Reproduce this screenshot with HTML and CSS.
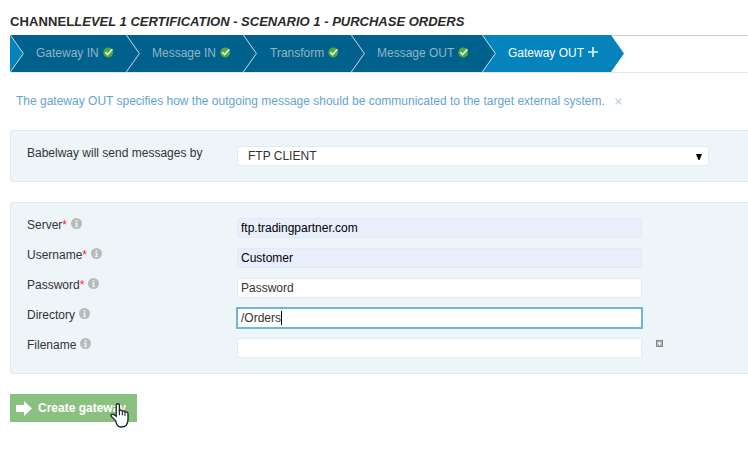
FILE: index.html
```html
<!DOCTYPE html>
<html lang="en">
<head>
<meta charset="utf-8">
<title>Channel</title>
<link rel="stylesheet" href="styles.css">
</head>
<body>
<svg class="defs" width="0" height="0" aria-hidden="true">
  <symbol id="check" viewBox="0 0 11 11"><circle cx="5.2" cy="5.5" r="4.9" fill="#53aa3c"/><path d="M2.3 5.2l2.3 2.4L9.4 2.2" fill="none" stroke="#e8f5e4" stroke-width="1.6"/></symbol>
  <symbol id="info" viewBox="0 0 11 11"><circle cx="5.5" cy="5.5" r="5.5" fill="#b9bbbb"/><path d="M4.7 2h1.8v1.5H4.7zM4 4.5h2.5V8H7v1H4V8h.7V5.4H4z" fill="#e9eeef"/></symbol>
  <symbol id="chevron" viewBox="0 0 14 37"><path d="M.3 0L13.4 18.5.3 37" fill="none" stroke="#c3dfeb" stroke-width="1"/></symbol>
</svg>
<h1 class="title"><span>CHANNEL</span><em>LEVEL 1 CERTIFICATION - SCENARIO 1 - PURCHASE ORDERS</em></h1>
<nav class="steps">
  <div class="step s1"><svg class="chev"><path d="M0 0L13 18.5 0 37z" fill="#0583bd"/><use href="#chevron"/></svg><span>Gateway IN</span><svg class="check"><use href="#check"/></svg></div>
  <div class="step s2"><svg class="chev"><use href="#chevron"/></svg><span>Message IN</span><svg class="check"><use href="#check"/></svg></div>
  <div class="step s3"><svg class="chev"><use href="#chevron"/></svg><span>Transform</span><svg class="check"><use href="#check"/></svg></div>
  <div class="step s4"><svg class="chev"><use href="#chevron"/></svg><span>Message OUT</span><svg class="check"><use href="#check"/></svg></div>
  <div class="step s5 active"><svg class="chev"><path d="M0 0L13 18.5 0 37z" fill="#00618c"/><use href="#chevron"/></svg><span>Gateway OUT</span><svg class="plus" viewBox="0 0 10 10"><path d="M5 0v10M0 5h10" stroke="#e4f2f9" stroke-width="1.7"/></svg></div>
</nav>
<p class="hint"><span>The gateway OUT specifies how the outgoing message should be communicated to the target external system.</span><svg class="close" viewBox="0 0 7 7"><path d="M.7.7l5.6 5.6M6.3.7L.7 6.3" stroke="#b5d5e8" stroke-width="1.4"/></svg></p>
<section class="panel method">
  <label class="label">Babelway will send messages by</label>
  <div class="select"><span>FTP CLIENT</span><svg class="arrow" viewBox="0 0 6 6"><path d="M0 0h6L3.5 6h-1z"/></svg></div>
</section>
<section class="panel fields">
  <div class="row"><label class="label">Server<b>*</b><svg class="info"><use href="#info"/></svg></label><div class="input auto">ftp.tradingpartner.com</div></div>
  <div class="row"><label class="label">Username<b>*</b><svg class="info"><use href="#info"/></svg></label><div class="input auto">Customer</div></div>
  <div class="row"><label class="label">Password<b>*</b><svg class="info"><use href="#info"/></svg></label><div class="input">Password</div></div>
  <div class="row"><label class="label">Directory<svg class="info"><use href="#info"/></svg></label><div class="input focus">/Orders<i class="caret"></i></div></div>
  <div class="row"><label class="label">Filename<svg class="info"><use href="#info"/></svg></label><div class="input"></div><svg class="add" viewBox="0 0 7 7"><path fill="#888" d="M0 0h7v7H0z"/><path fill="#b5b5b5" d="M1 1h5v5H1z"/><path d="M3.5 2v3M2 3.5h3" stroke="#fff"/></svg></div>
</section>
<button class="create"><svg class="go" viewBox="0 0 16 15"><path d="M0 4h8V0l8 7.5L8 15v-4H0z" fill="#fff"/></svg><span>Create gateway</span><svg class="cursor" viewBox="0 0 19 25"><path d="M5.6 17.6L1.6 13.6C.2 12.1 1.8 10.4 3.6 11.4l2.6 1.8V2.4c0-2.2 3.2-2.2 3.2 0v5.2c1-.9 2.6-.5 2.9.5.9-.5 2.5-.1 2.7.9 1.4-.4 3 .2 3 1.8v5.4c0 4.6-2.4 7.8-6.8 7.8-3 0-4.9-2.4-5.6-6.4z" fill="#fff" stroke="#1c2029" stroke-width="1.3"/><path d="M9.4 7.5v4.7M12.3 8.3v4M15 9.3v3.4" stroke="#1c2029" stroke-width="1.1"/></svg></button>
</body>
</html>
```
FILE: styles.css
```css
* { box-sizing: border-box; }
body {
  margin: 0;
  padding: 13px 0 0 10px;
  width: 748px;
  height: 464px;
  overflow: hidden;
  background: #fff;
  color: #333;
  font: 12px/16px "Liberation Sans", Arial, sans-serif;
}
svg { display: block; flex: none; }
.defs { position: absolute; }
.title { margin: 0; height: 22px; font-size: 13px; line-height: 17px; font-weight: 700; color: #2a2a2a; white-space: nowrap; }
.title span { letter-spacing: .1px; }
.steps { display: flex; height: 38px; border-top: 1px solid #ccc; border-bottom: 1px solid #e8e8e8; }
.step { position: relative; display: flex; height: 37px; margin-top: -1px; padding: 1px 0 3px 26px; align-items: center; background: #00618c; color: #91b4c6; white-space: nowrap; }
.s1 { width: 116px; }
.s2 { width: 117px; }
.s3 { width: 108px; padding-left: 27px; }
.s4 { width: 131px; }
.s5 { width: 142px; clip-path: polygon(0 0, 129px 0, 100% 50%, 129px 100%, 0 100%); }
.active { background: #0583bd; color: #fff; }
.chev { position: absolute; left: 0; top: 0; width: 14px; height: 37px; }
.check { width: 11px; height: 11px; margin: -1px 0 0 4px; }
.plus { width: 10px; height: 10px; margin: -1px 0 0 4px; }
.hint { display: flex; align-items: center; margin: 20px 0 0; padding-left: 6px; height: 16px; color: #62a5d0; white-space: nowrap; }
.close { width: 7px; height: 7px; margin: 1px 0 0 10px; }
.panel { background: #edf5f9; border: 1px solid #dfecf6; border-right: 0; padding-left: 16px; }
.method { display: flex; height: 52px; margin-top: 21px; padding-top: 15px; }
.label { display: flex; width: 210px; height: 16px; margin-top: -1px; }
.label b { color: #f22; font-weight: 400; }
.info { width: 11px; height: 11px; margin: 1px 0 0 3.6px; }
.select { display: flex; align-items: center; justify-content: space-between; width: 472px; height: 20px; padding: 0 6px 0 10px; background: #fff; border: 1px solid #dfecf6; }
.arrow { width: 6px; height: 6px; margin-top: 1px; }
.fields { height: 172px; margin-top: 20px; padding-top: 15px; }
.row { display: flex; height: 30px; }
.input { display: flex; align-items: center; width: 405px; height: 20px; padding: 0 3px; background: #fff; border: 1px solid #dfecf6; }
.auto { background: #e8eefc; color: #000; }
.focus { outline: 1px solid #6db8d8; border-color: #6db8d8; }
.caret { width: 1px; height: 14px; background: #000; }
.add { width: 7px; height: 7px; margin: 2px 0 0 14px; }
.create { position: relative; display: flex; align-items: center; width: 127px; height: 28px; margin: 20px 0 0; padding: 0 0 0 6px; border: 0; background: #8cc080; color: #fff; font: bold 12px/16px "Liberation Sans", Arial, sans-serif; white-space: nowrap; }
.go { width: 16px; height: 15px; margin-right: 6px; }
.cursor { position: absolute; left: 100px; top: 9px; width: 19px; height: 25px; }
```
